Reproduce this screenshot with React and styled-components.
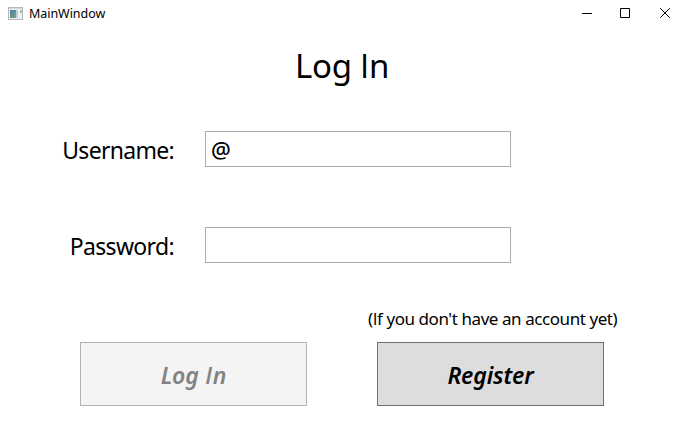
import React from "react";
import styled, { createGlobalStyle } from "styled-components";

const Global = createGlobalStyle`
  * { box-sizing: border-box; }
  body { margin: 0; background: #fff; color: #000; font-family: "Noto Sans", "Open Sans", sans-serif; }
`;

const Window = styled.main`
  width: 684px;
  height: 440px;
  background: #fff;
  overflow: hidden;
  white-space: nowrap;
`;

const TitleBar = styled.header`
  display: flex;
  align-items: center;
  height: 26px;
  padding: 0 14px 0 8px;
`;

const Caption = styled.span`
  flex: 1;
  margin-left: 6px;
  padding-top: 2px;
  font-size: 12.5px;
  letter-spacing: -0.05px;
  line-height: 24px;
`;

const Controls = styled.div`
  display: grid;
  grid-template-columns: 38px 40px 10px;
`;

const Title = styled.h1`
  margin: 22px 0 0;
  height: 36px;
  font-size: 33px;
  line-height: 36px;
  font-weight: 400;
  text-align: center;
  letter-spacing: -0.3px;
`;

const PlainI = styled.span`
  font-family: "Open Sans", sans-serif;
  line-height: 0;
  margin: 0 ${(p) => p.$room || 0}px;
`;

const Fields = styled.section`
  display: grid;
  grid-template-columns: 174px 306px;
  column-gap: 31px;
  row-gap: 60px;
  margin-top: 47px;
`;

const Label = styled.label`
  font-size: 23px;
  line-height: 38px;
  height: 36px;
  text-align: right;
  letter-spacing: ${(p) => p.$spacing}px;
`;

const Input = styled.input`
  width: 306px;
  height: 36px;
  padding: 0 0 0 5px;
  border: 1px solid #abadb3;
  border-radius: 0;
  outline: none;
  background: #fff;
  color: #000;
  font: 500 22px "Noto Sans", sans-serif;
`;

const Actions = styled.section`
  display: grid;
  grid-template-columns: 227px 227px;
  column-gap: 70px;
  margin: 43px 0 0 80px;
`;

const Note = styled.p`
  grid-column: 2;
  margin: 0 0 0 -9px;
  height: 36px;
  font-size: 17px;
  line-height: 26px;
  letter-spacing: -0.43px;
`;

const Button = styled.button`
  height: 64px;
  padding: 2px 0 0;
  border: 1px solid #707070;
  border-radius: 0;
  background: #ddd;
  color: #000;
  font: italic 600 23px/32px "Noto Sans", sans-serif;
  letter-spacing: -0.15px;

  &:disabled {
    border-color: #adb2b5;
    background: #f4f4f4;
    color: #838383;
  }
`;

function AppIcon() {
  return (
    <svg width="15" height="13" viewBox="0 0 15 13" shapeRendering="crispEdges">
      <defs>
        <linearGradient id="pane" x1="0" y1="0" x2="1" y2="1">
          <stop offset="0" stopColor="#5279a5" />
          <stop offset="1" stopColor="#70aa86" />
        </linearGradient>
      </defs>
      <rect x="0.5" y="0.5" width="14" height="12" fill="#f1f2f2" stroke="#b4b8ba" />
      <rect x="1" y="1" width="13" height="1" fill="#d5d8da" />
      <rect x="2" y="3" width="6" height="8" fill="url(#pane)" />
      <rect x="8" y="3" width="2" height="8" fill="#c3cfd6" />
      <rect x="12" y="3" width="2" height="3" fill="#9fc0ae" />
    </svg>
  );
}

const strokes = {
  minimize: "M0 5.5H10",
  maximize: "M0.5 0.5H9.5V9.5H0.5Z",
  close: "M0.2 0.2L9.8 9.8M9.8 0.2L0.2 9.8",
};

function ControlIcon({ kind }) {
  return (
    <svg width="10" height="10" viewBox="0 0 10 10" fill="none" stroke="#000">
      <path d={strokes[kind]} />
    </svg>
  );
}

export default function App() {
  return (
    <Window>
      <Global />
      <TitleBar>
        <AppIcon />
        <Caption>MainWindow</Caption>
        <Controls>
          <ControlIcon kind="minimize" />
          <ControlIcon kind="maximize" />
          <ControlIcon kind="close" />
        </Controls>
      </TitleBar>
      <Title>Log <PlainI>I</PlainI>n</Title>
      <Fields>
        <Label htmlFor="user" $spacing={-0.7}>Username:</Label>
        <Input id="user" defaultValue="@" />
        <Label htmlFor="pass" $spacing={-0.65}>Password:</Label>
        <Input id="pass" type="password" />
      </Fields>
      <Actions>
        <Note>(<PlainI>I</PlainI>f you don't have an account yet)</Note>
        <Button disabled>Log <PlainI $room={0.8}>I</PlainI>n</Button>
        <Button>Register</Button>
      </Actions>
    </Window>
  );
}
